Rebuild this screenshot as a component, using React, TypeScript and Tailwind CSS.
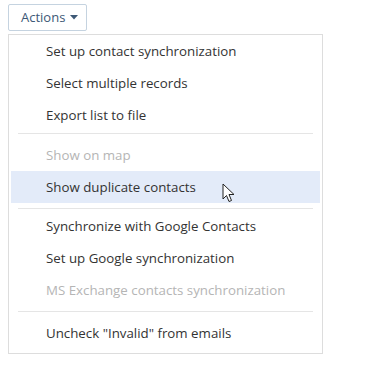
import React from "react";

type Item = { label: string; disabled?: boolean; active?: boolean };

const Row = ({ item }: { item: Item }) => (
  <div
    className={
      "h-8 flex items-center pl-[35px] pt-[1px] mx-[2px] text-[13.3px] " +
      (item.active ? "bg-[#e3ebf9] " : "") +
      (item.disabled ? "text-[#b5b5b5]" : "text-[#333333]")
    }
  >
    {item.label}
  </div>
);

export default function App() {
  return (
    <div
      className="relative w-[381px] h-[365px] bg-white"
      style={{ fontFamily: '"Open Sans", "Noto Sans", sans-serif' }}
    >
      <div className="pt-[4px] pl-[8px]">
        <button className="h-[27px] w-[79px] border border-[#c5d3e0] rounded-[2px] bg-white flex items-center pl-[12px] text-[13px] text-[#3d5876]">
          <span>Actions</span>
          <svg width="8" height="5" viewBox="0 0 8 5" className="ml-[5px]">
            <path d="M0 0 L8 0 L4 4.5 Z" fill="#3d5876" />
          </svg>
        </button>
        <div className="mt-[3px] w-[315px] border border-[#dddddd] bg-white pb-[4px]">
          <Row item={{ label: "Set up contact synchronization" }} />
          <Row item={{ label: "Select multiple records" }} />
          <Row item={{ label: "Export list to file" }} />
          <div className="mx-[9px] mt-[2px] mb-[5px] h-px bg-[#e5e5e5]" />
          <Row item={{ label: "Show on map", disabled: true }} />
          <Row item={{ label: "Show duplicate contacts", active: true }} />
          <div className="mx-[9px] mt-[5px] mb-[1px] h-px bg-[#e5e5e5]" />
          <Row item={{ label: "Synchronize with Google Contacts" }} />
          <Row item={{ label: "Set up Google synchronization" }} />
          <Row item={{ label: "MS Exchange contacts synchronization", disabled: true }} />
          <div className="mx-[9px] mt-[5px] mb-[5px] h-px bg-[#e5e5e5]" />
          <Row item={{ label: 'Uncheck "Invalid" from emails' }} />
        </div>
      </div>
      <svg
        className="absolute left-[222px] top-[183px]"
        width="14"
        height="21"
        viewBox="0 0 14 21"
      >
        <path
          d="M1 1 L1 16 L4.5 12.5 L7 18.5 L9.5 17.5 L7 11.5 L12 11.5 Z"
          fill="white"
          stroke="#222"
          strokeWidth="1"
          strokeLinejoin="round"
        />
      </svg>
    </div>
  );
}
